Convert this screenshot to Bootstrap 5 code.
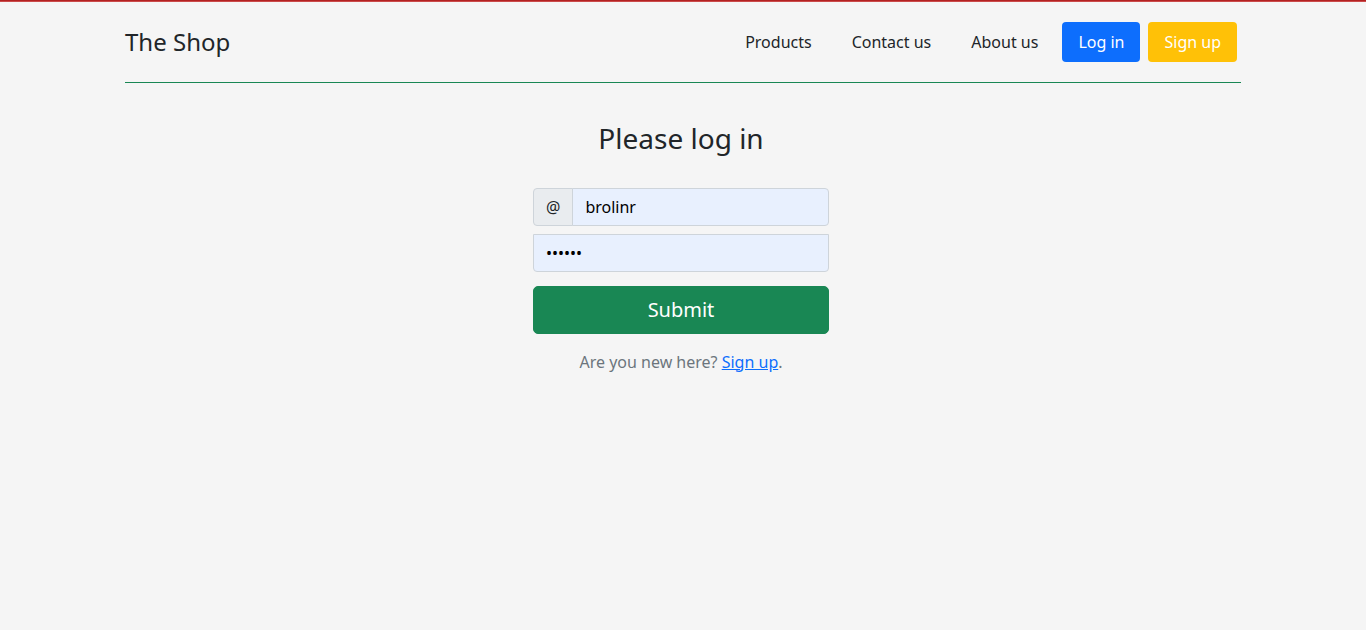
<!DOCTYPE html>
<html lang="en">
<head>
<meta charset="utf-8">
<meta name="viewport" content="width=device-width, initial-scale=1">
<title>The Shop</title>
<link href="https://cdn.jsdelivr.net/npm/bootstrap@5.3.0/dist/css/bootstrap.min.css" rel="stylesheet">
<style>
  body {
    font-family: "Noto Sans", sans-serif;
    background: #f5f5f5;
    border-top: 1px solid #b22222;
  }
  .top-line { height: 1px; background: #cb4a4a; }
  .shop-container { max-width: 1140px; }
  .shop-header { border-bottom: 1px solid #198754; padding: 20px 0; margin-bottom: 39px; }
  .shop-nav .nav-link { color: #212529; border-radius: 4px; }
  .shop-nav .nav-link.link-login { background: #0d6efd; color: #fff; }
  .shop-nav .nav-link.link-signup { background: #ffc107; color: #fff; }
  .login-form { width: 100%; max-width: 296px; }
  .login-form .form-control { background: #e8f0fe; border-color: #ced4da; color: #000; border-radius: 4px; }
  .login-form .input-group-text { background: #e9ecef; border-color: #ced4da; border-radius: 4px; }
  .login-form .field-password { border-radius: 0 0 4px 4px; margin-bottom: 14px; }
  .login-form .btn { border-radius: 5px; }
  .login-form h1 { font-size: 28px; font-weight: 400; margin-bottom: 32px; }
  .login-note { color: #6c757d; }
  .login-note a { color: #0d6efd; }
</style>
</head>
<body>
<div class="top-line"></div>
<div class="container shop-container">
  <header class="shop-header d-flex flex-wrap align-items-center justify-content-between">
    <a href="#" class="fs-4 text-dark text-decoration-none">The Shop</a>
    <nav>
      <ul class="shop-nav nav nav-pills">
        <li class="nav-item mx-1"><a class="nav-link" href="#">Products</a></li>
        <li class="nav-item mx-1"><a class="nav-link" href="#">Contact us</a></li>
        <li class="nav-item mx-1"><a class="nav-link" href="#">About us</a></li>
        <li class="nav-item mx-1"><a class="nav-link link-login" href="#">Log in</a></li>
        <li class="nav-item mx-1"><a class="nav-link link-signup" href="#">Sign up</a></li>
      </ul>
    </nav>
  </header>
  <main class="d-flex justify-content-center pe-1">
    <form class="login-form text-center">
      <h1>Please log in</h1>
      <div class="input-group mb-2">
        <label class="input-group-text" for="username">@</label>
        <input type="text" class="form-control" id="username" value="brolinr" aria-label="Username">
      </div>
      <input type="password" class="form-control field-password" value="secret" aria-label="Password">
      <button type="submit" class="btn btn-success btn-lg w-100">Submit</button>
      <p class="login-note mt-3">Are you new here? <a href="#">Sign up</a>.</p>
    </form>
  </main>
</div>
<script src="https://cdn.jsdelivr.net/npm/bootstrap@5.3.0/dist/js/bootstrap.bundle.min.js"></script>
</body>
</html>
